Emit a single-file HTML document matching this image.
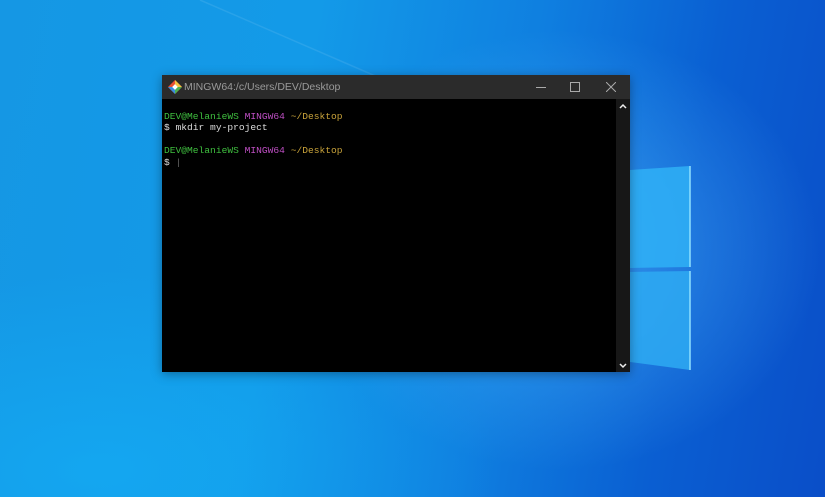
<!DOCTYPE html>
<html><head><style>
html,body{margin:0;padding:0}
body{width:825px;height:497px;overflow:hidden;position:relative;
background:
radial-gradient(ellipse 260px 220px at 560px 250px, rgba(90,190,255,0.55), rgba(90,190,255,0) 100%),
radial-gradient(ellipse 400px 200px at 100px 470px, rgba(20,180,250,0.5), rgba(20,180,250,0) 100%),
linear-gradient(100deg,#1597e4 0%,#139ae8 35%,#0f7fe0 60%,#0a5fd2 80%,#0a4ec8 100%);}
.beam{position:absolute;left:0;top:0;width:825px;height:497px}
.win{position:absolute;left:162px;top:75px;width:468px;height:297px;background:#000;box-shadow:0 2px 10px rgba(0,0,0,.35)}
.tb{position:absolute;left:0;top:0;width:468px;height:24px;background:#2b2b2b;color:#9a9a9a;font:10.5px "Liberation Sans",sans-serif}
.tb .t{position:absolute;left:22px;top:6px}
.sb{position:absolute;right:0;top:24px;width:14px;height:273px;background:#171717}
.term{position:absolute;left:2px;top:36px;font:9.6px/11.4px "Liberation Mono",monospace;color:#ddd;white-space:pre}
.g{color:#3fbf3f}.m{color:#bf4fc4}.y{color:#c8a23a}
</style></head><body>
<svg class="beam" viewBox="0 0 825 497">
<line x1="200" y1="0" x2="380" y2="78" stroke="rgba(255,255,255,0.09)" stroke-width="1.5"/>
<polygon points="630,170 690,166 690,267 630,268" fill="#2fb0f6" opacity="0.85"/>
<polygon points="630,272 690,271 690,370 630,362" fill="#2eaaf2" opacity="0.85"/>
<polyline points="690,166 690,267" stroke="#8fe0ff" stroke-width="1.5"/>
<polyline points="690,271 690,370" stroke="#8fe0ff" stroke-width="1.5"/>
</svg>
<div class="win">
<div class="tb">
<svg style="position:absolute;left:6px;top:5px" width="14" height="14" viewBox="0 0 14 14">
<polygon points="7,0 14,7 7,14 0,7" fill="#e94e31"/><polygon points="7,0 14,7 7,7" fill="#f5c242"/><polygon points="0,7 7,7 7,14" fill="#3b8be0"/><polygon points="7,7 14,7 7,14" fill="#4cb050"/><rect x="5" y="5" width="4" height="4" fill="#fff" transform="rotate(45 7 7)"/></svg>
<span class="t">MINGW64:/c/Users/DEV/Desktop</span>
<div style="position:absolute;left:374px;top:12px;width:10px;height:1px;background:#aaa"></div>
<div style="position:absolute;left:408px;top:7px;width:8px;height:8px;border:1px solid #aaa"></div>
<svg style="position:absolute;left:444px;top:7px" width="10" height="10"><path d="M0 0L10 10M10 0L0 10" stroke="#aaa" stroke-width="1"/></svg>
</div>
<div class="sb">
<svg style="position:absolute;left:3px;top:4px" width="8" height="6"><path d="M1 5L4 2L7 5" stroke="#eee" stroke-width="1.5" fill="none"/></svg>
<svg style="position:absolute;left:3px;top:264px" width="8" height="6"><path d="M1 1L4 4L7 1" stroke="#eee" stroke-width="1.5" fill="none"/></svg>
</div>
<div class="term"><span class="g">DEV@MelanieWS</span> <span class="m">MINGW64</span> <span class="y">~/Desktop</span>
$ mkdir my-project

<span class="g">DEV@MelanieWS</span> <span class="m">MINGW64</span> <span class="y">~/Desktop</span>
$ <span style="color:#666">|</span></div>
</div>
</body></html>
